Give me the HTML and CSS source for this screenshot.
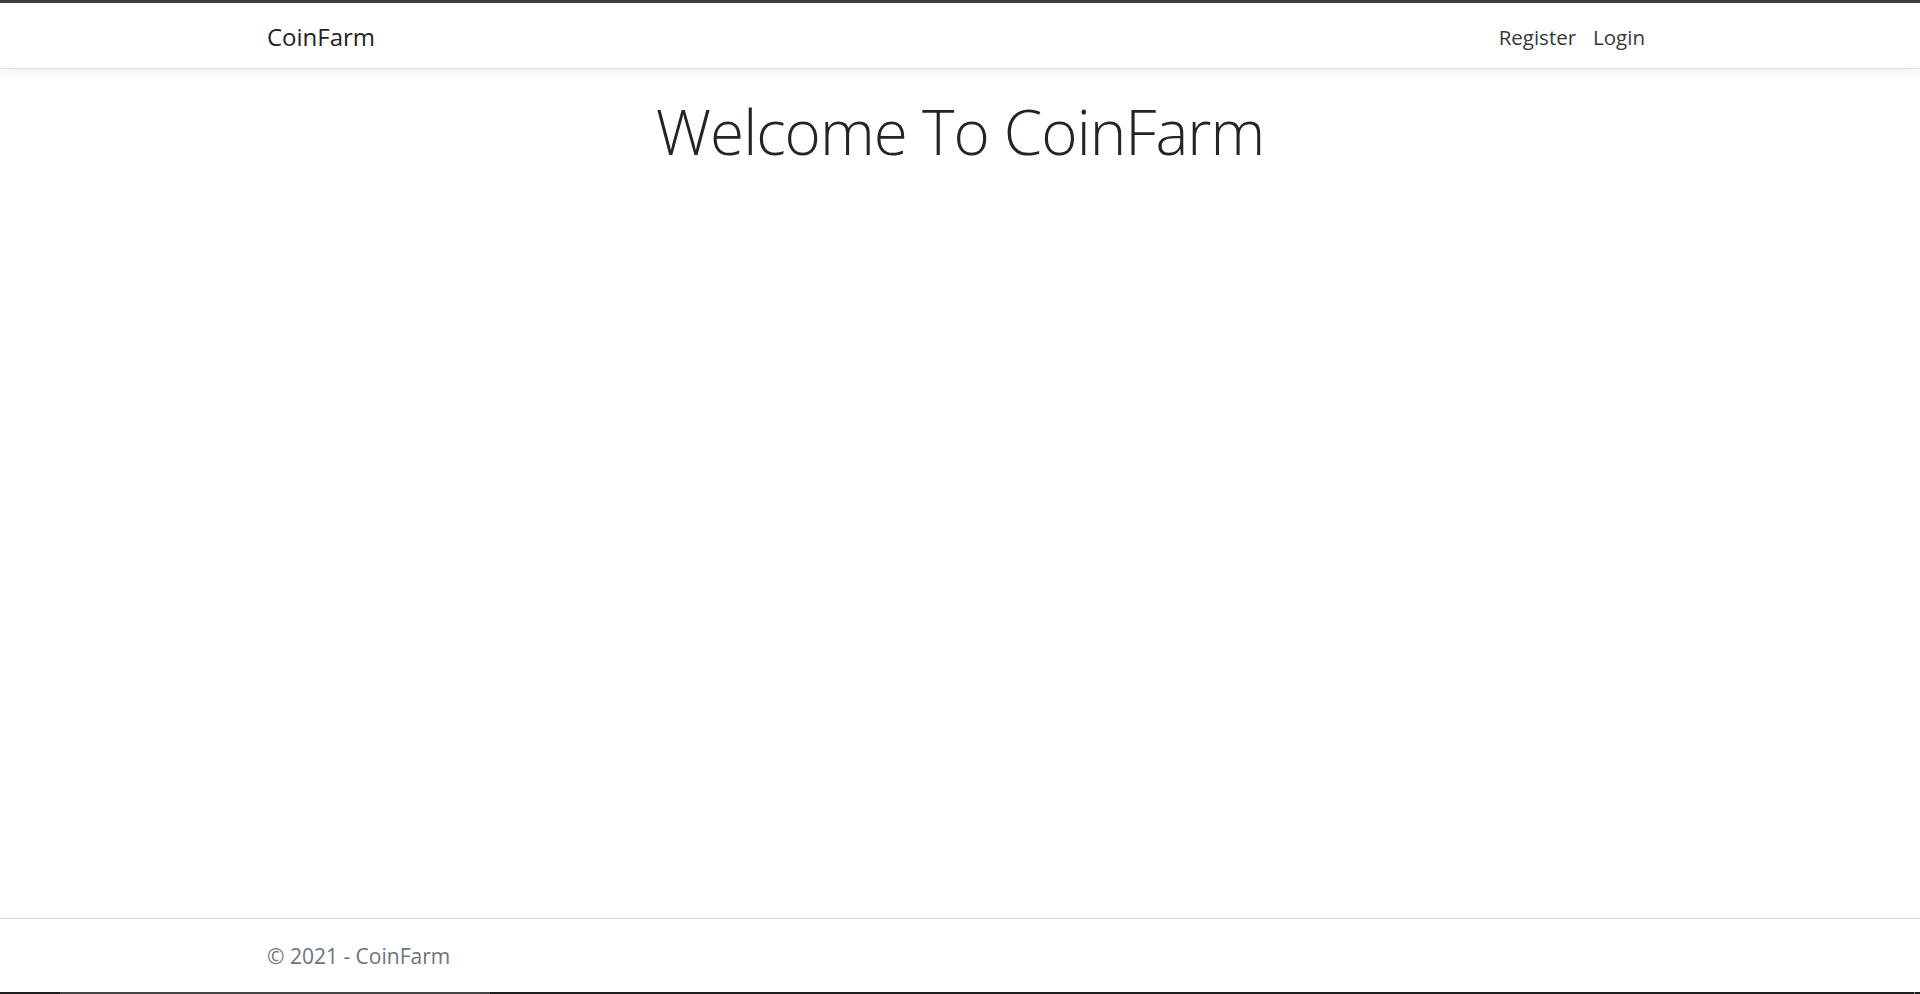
FILE: index.html
```html
<!DOCTYPE html>
<html lang="en">
<head>
<meta charset="utf-8">
<title>CoinFarm</title>
<link rel="stylesheet" href="styles.css">
</head>
<body>
<div class="topbar"></div>
<header class="navbar">
  <div class="container nav-inner">
    <a class="brand" href="#">CoinFarm</a>
    <nav class="nav-links">
      <a class="nav-link" href="#">Register</a>
      <a class="nav-link" href="#">Login</a>
    </nav>
  </div>
</header>
<main class="main">
  <div class="hero">
    <h1 class="display">Welcome To CoinFarm</h1>
  </div>
</main>
<footer class="footer">
  <div class="container">&copy; 2021 - CoinFarm</div>
</footer>
<div class="bottombar">
  <div class="bb-left"></div>
  <div class="bb-thumb"></div>
  <div class="bb-rest"></div>
  <div class="bb-mark"></div>
  <div class="bb-end"></div>
</div>
</body>
</html>
```

FILE: styles.css
```css
html, body {
  margin: 0;
  padding: 0;
}
body {
  font-family: "Open Sans", "Noto Sans", sans-serif;
  color: #212529;
  background: #fff;
  height: 100vh;
  display: flex;
  flex-direction: column;
  overflow: hidden;
}
.topbar {
  height: 3px;
  background: #3f3f3f;
  flex: none;
}
.navbar {
  height: 65px;
  flex: none;
  background: #fff;
  border-bottom: 1px solid #dfdfdf;
  box-shadow: 0 4px 12px rgba(0, 0, 0, 0.05);
  position: relative;
  z-index: 1;
}
.container {
  width: 1386px;
  margin: 0 auto;
}
.nav-inner {
  height: 100%;
  box-sizing: border-box;
  padding-top: 2px;
  display: flex;
  align-items: center;
  justify-content: space-between;
}
.brand {
  font-size: 24px;
  color: rgba(0, 0, 0, 0.9);
  text-decoration: none;
}
.nav-links {
  display: flex;
}
.nav-link {
  font-size: 20.5px;
  color: #343a40;
  text-decoration: none;
  padding: 0 8.5px;
}
.nav-link:last-child {
  padding-right: 8px;
}
.main {
  flex: 1;
}
.hero {
  text-align: center;
}
.display {
  font-size: 62px;
  font-weight: 300;
  line-height: 1.2;
  letter-spacing: -1px;
  margin: 25px 0 0;
}
.footer {
  flex: none;
  border-top: 1px solid #dfdfdf;
  padding-top: 2px;
  line-height: 71px;
  font-size: 21px;
  color: #6c757d;
  white-space: nowrap;
}
.bottombar {
  flex: none;
  height: 2px;
  display: flex;
}
.bb-left {
  width: 60px;
  background: #1e1e1e;
}
.bb-thumb {
  width: 430px;
  background: #454545;
}
.bb-rest {
  flex: 1;
  background: #1e1e1e;
}
.bb-mark {
  width: 1px;
  background: #8a8a8a;
}
.bb-end {
  width: 5px;
  background: #1e1e1e;
}
```
